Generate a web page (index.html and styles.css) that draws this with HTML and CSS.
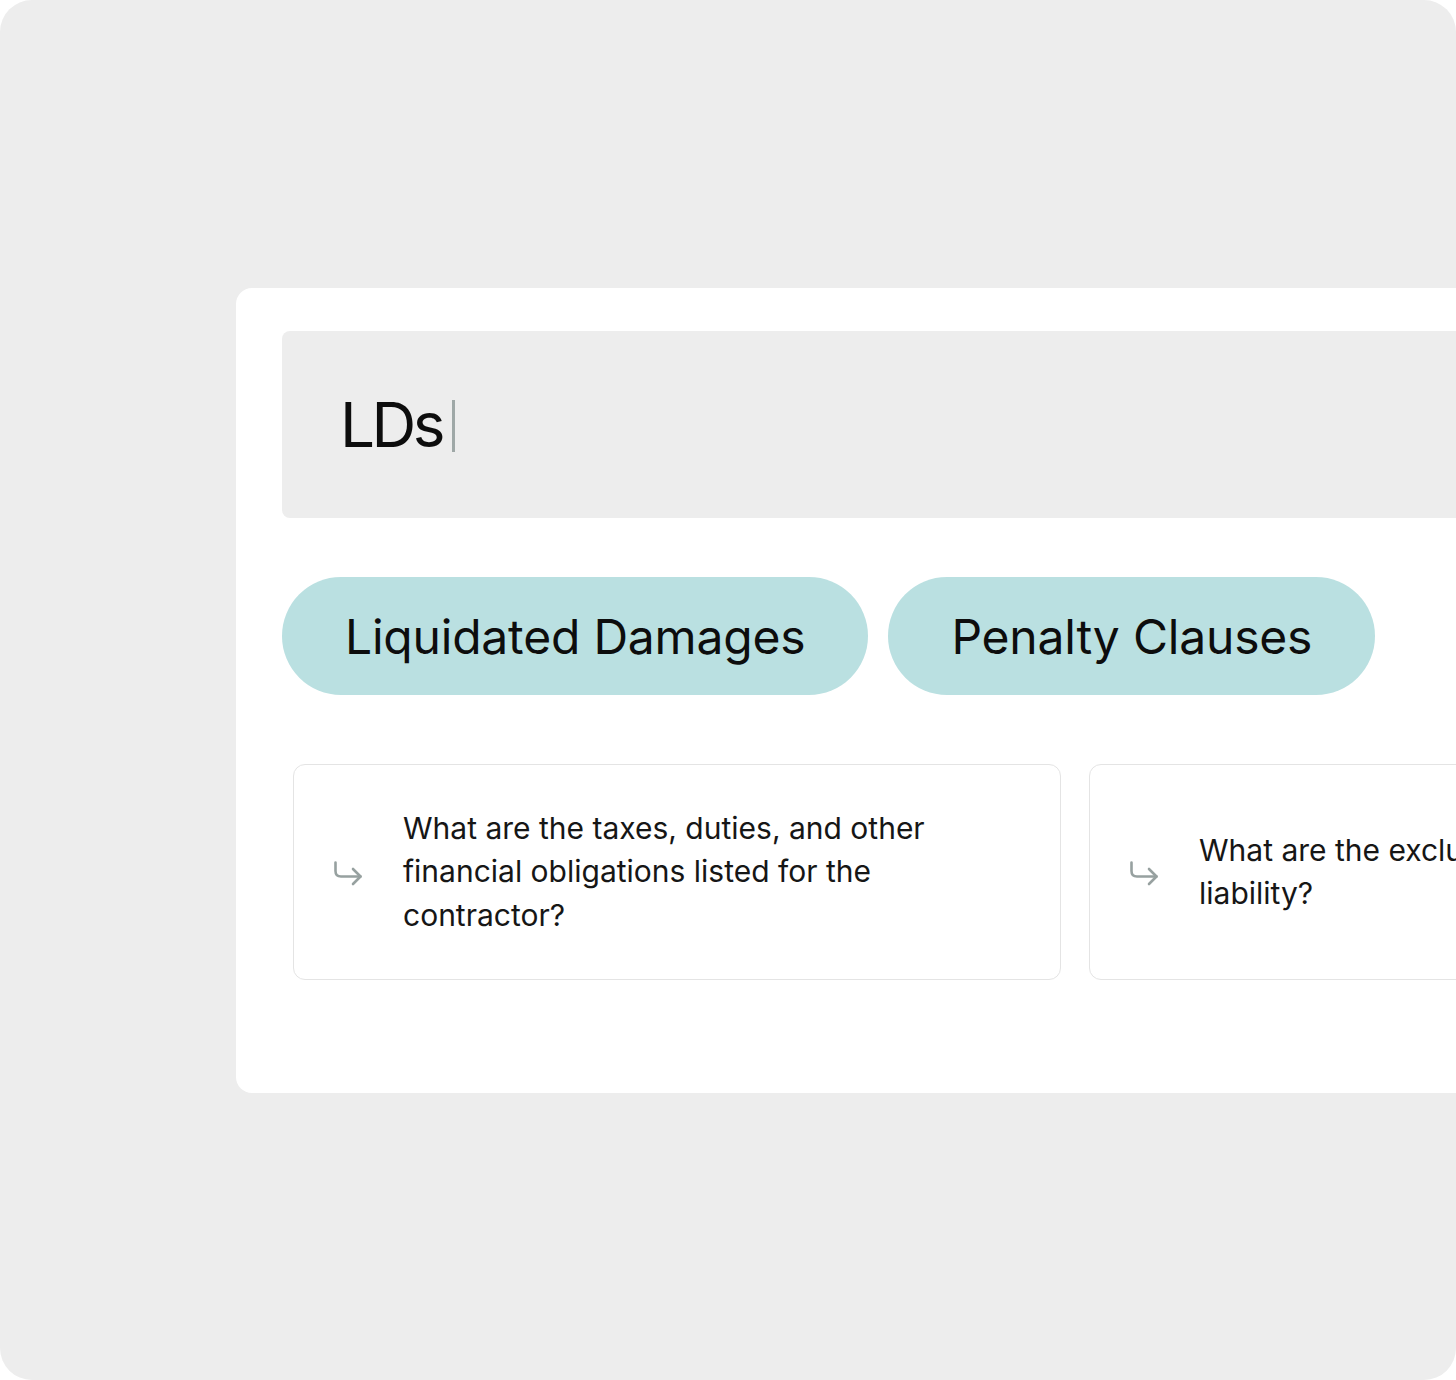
FILE: index.html
```html
<!DOCTYPE html>
<html lang="en">
<head>
<meta charset="utf-8">
<title>Search</title>
<link rel="stylesheet" href="styles.css">
</head>
<body>
<div class="frame">
  <div class="panel">
    <div class="search">
      <span class="query">LDs</span><span class="caret"></span>
    </div>
    <div class="chips">
      <div class="chip">Liquidated Damages</div>
      <div class="chip">Penalty Clauses</div>
    </div>
    <div class="questions">
      <div class="question">
        <svg class="arrow" width="30" height="26" viewBox="0 0 30 26" fill="none" stroke="#97a1a0" stroke-width="2.6" stroke-linecap="round" stroke-linejoin="round">
          <path d="M2.5 2.5 V11 Q2.5 16.5 8 16.5 H27.5"/>
          <path d="M20 9 L27.5 16.5 L20 24"/>
        </svg>
        <p class="qtext">What are the taxes, duties, and other financial obligations listed for the contractor?</p>
      </div>
      <div class="question">
        <svg class="arrow" width="30" height="26" viewBox="0 0 30 26" fill="none" stroke="#97a1a0" stroke-width="2.6" stroke-linecap="round" stroke-linejoin="round">
          <path d="M2.5 2.5 V11 Q2.5 16.5 8 16.5 H27.5"/>
          <path d="M20 9 L27.5 16.5 L20 24"/>
        </svg>
        <p class="qtext">What are the exclusions to the limit of liability?</p>
      </div>
    </div>
  </div>
</div>
</body>
</html>
```

FILE: styles.css
```css
html, body {
  margin: 0;
  padding: 0;
  background: #ffffff;
}

body {
  font-family: Inter, "Liberation Sans", sans-serif;
  color: #111111;
}

.frame {
  width: 1456px;
  height: 1380px;
  background: #ededed;
  border-radius: 32px;
  overflow: hidden;
  padding-top: 288px;
  padding-left: 236px;
  box-sizing: border-box;
}

.panel {
  width: 1500px;
  height: 805px;
  background: #ffffff;
  border-radius: 16px;
  box-sizing: border-box;
  padding: 43px 0 0 46px;
}

.search {
  height: 187px;
  background: #ededed;
  border-radius: 8px;
  display: flex;
  align-items: center;
  padding-left: 58px;
}

.query {
  font-size: 62px;
  line-height: 1;
  color: #0d0d0d;
  letter-spacing: -3.5px;
}

.caret {
  display: inline-block;
  width: 3px;
  height: 52px;
  background: #9fa8a7;
  margin-left: 10px;
  margin-top: 2px;
}

.chips {
  display: flex;
  gap: 20px;
  margin-top: 59px;
}

.chip {
  height: 118px;
  border-radius: 59px;
  background: #bae0e1;
  display: flex;
  align-items: center;
  padding: 0 63px;
  font-size: 48px;
  color: #0d0d0d;
  letter-spacing: -0.2px;
}

.questions {
  display: flex;
  gap: 28px;
  margin-top: 69px;
  margin-left: 11px;
}

.question {
  flex: 0 0 768px;
  height: 216px;
  box-sizing: border-box;
  border: 1px solid #e4e4e4;
  border-radius: 12px;
  display: flex;
  align-items: center;
  padding-left: 39px;
}

.arrow {
  flex: 0 0 auto;
  margin-right: 40px;
  margin-top: 2px;
}

.qtext {
  margin: 0;
  width: 580px;
  font-size: 30px;
  line-height: 43.5px;
  color: #161616;
}
```
